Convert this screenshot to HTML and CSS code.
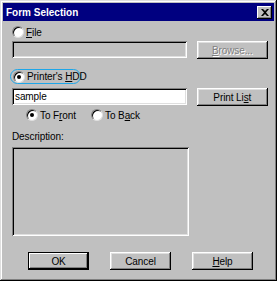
FILE: index.html
```html
<!DOCTYPE html>
<html lang="en">
<head>
    <meta charset="UTF-8">
    <title>Form Selection</title>
    <link rel="stylesheet" href="styles.css">
</head>
<body>
    <div class="window">
        <div class="titlebar">
            <span class="title">Form Selection</span>
            <button class="close-btn">
                <svg width="8" height="7" viewBox="0 0 8 7"><path d="M0 0h2l2 2 2-2h2L5 3.5 8 7H6L4 5 2 7H0l3-3.5z" fill="#000"/></svg>
            </button>
        </div>
        <div class="content">
            <label class="radio-row">
                <span class="radio"></span>
                <span><u>F</u>ile</span>
            </label>
            <div class="field-row">
                <div class="field disabled"></div>
                <button class="btn disabled-btn"><u>B</u>rowse...</button>
            </div>
            <label class="radio-row hdd">
                <span class="radio checked"></span>
                <span>Printer's <u>H</u>DD</span>
            </label>
            <div class="field-row second">
                <div class="field">sample</div>
                <button class="btn">Print Li<u>s</u>t</button>
            </div>
            <div class="sub-options">
                <label class="radio-row front">
                    <span class="radio checked"></span>
                    <span>To F<u>r</u>ont</span>
                </label>
                <label class="radio-row">
                    <span class="radio"></span>
                    <span>To B<u>a</u>ck</span>
                </label>
            </div>
            <div class="desc-label">Description:</div>
            <div class="desc-box"></div>
            <div class="actions">
                <button class="btn default">OK</button>
                <button class="btn">Cancel</button>
                <button class="btn"><u>H</u>elp</button>
            </div>
        </div>
    </div>
</body>
</html>
```
FILE: styles.css
```css
* {
    box-sizing: border-box;
}

body {
    margin: 0;
    background-color: #c0c0c0;
    font-family: "Liberation Sans", Arial, sans-serif;
    font-size: 10px;
    letter-spacing: -0.1px;
    color: #000;
}

.window {
    width: 277px;
    height: 281px;
    padding: 3px;
    background-color: #c0c0c0;
    box-shadow: inset -1px -1px #000, inset 1px 1px #dfdfdf, inset -2px -2px #808080, inset 2px 2px #fff;
}

.titlebar {
    height: 18px;
    background-color: #000080;
    display: flex;
    align-items: center;
    justify-content: space-between;
    padding: 0 2px 0 3px;
}

.title {
    color: #fff;
    font-weight: bold;
    font-size: 10px;
    letter-spacing: 0;
}

.close-btn {
    width: 15px;
    height: 13px;
    padding: 0;
    border: none;
    background-color: #c0c0c0;
    display: flex;
    align-items: center;
    justify-content: center;
    box-shadow: inset -1px -1px #000, inset 1px 1px #fff, inset -2px -2px #808080;
}

.content {
    padding: 5px 6px 0 9px;
}

.radio-row {
    display: flex;
    align-items: center;
    gap: 2px;
    height: 12px;
    white-space: nowrap;
}

.radio {
    flex: none;
    width: 12px;
    height: 12px;
    border-radius: 50%;
    background-color: #fff;
    border: 1px solid;
    border-color: #808080 #dfdfdf #dfdfdf #808080;
    box-shadow: inset 1px 1px #000;
    position: relative;
}

.radio.checked::after {
    content: "";
    position: absolute;
    left: 3px;
    top: 3px;
    width: 4px;
    height: 4px;
    border-radius: 50%;
    background-color: #000;
}

.field-row {
    display: flex;
    gap: 10px;
    margin-top: 3px;
}

.field-row.second {
    margin-top: 4px;
}

.field {
    width: 176px;
    height: 17px;
    background-color: #fff;
    padding: 2px 3px;
    box-shadow: inset 1px 1px #808080, inset -1px -1px #fff, inset 2px 2px #000, inset -2px -2px #dfdfdf;
    line-height: 13px;
}

.field.disabled {
    background-color: #c0c0c0;
}

.btn {
    width: 72px;
    height: 18px;
    padding: 0;
    border: none;
    background-color: #c0c0c0;
    font-family: inherit;
    font-size: 10px;
    letter-spacing: -0.1px;
    color: #000;
    box-shadow: inset -1px -1px #000, inset 1px 1px #fff, inset -2px -2px #808080, inset 2px 2px #dfdfdf;
}

.disabled-btn {
    color: #808080;
    text-shadow: 1px 1px #fff;
}

.hdd {
    margin-top: 10px;
    width: 71px;
    height: 15px;
    margin-left: -2px;
    padding-left: 2px;
    border: 1px solid #1ea6e8;
    border-radius: 8px;
}

.sub-options {
    display: flex;
    margin-top: 3px;
    padding-left: 14px;
}

.sub-options .front {
    width: 65px;
}

.desc-label {
    margin-top: 10px;
    height: 13px;
}

.desc-box {
    width: 177px;
    height: 89px;
    margin-top: 3px;
    box-shadow: inset 1px 1px #808080, inset -1px -1px #fff, inset 2px 2px #000, inset -2px -2px #dfdfdf;
}

.actions {
    display: flex;
    gap: 21px;
    margin-top: 16px;
    padding-left: 16px;
}

.actions .btn {
    width: 61px;
}

.btn.default {
    box-shadow: inset -1px -1px #000, inset 1px 1px #000, inset -2px -2px #000, inset 2px 2px #fff, inset -3px -3px #808080;
}
```
